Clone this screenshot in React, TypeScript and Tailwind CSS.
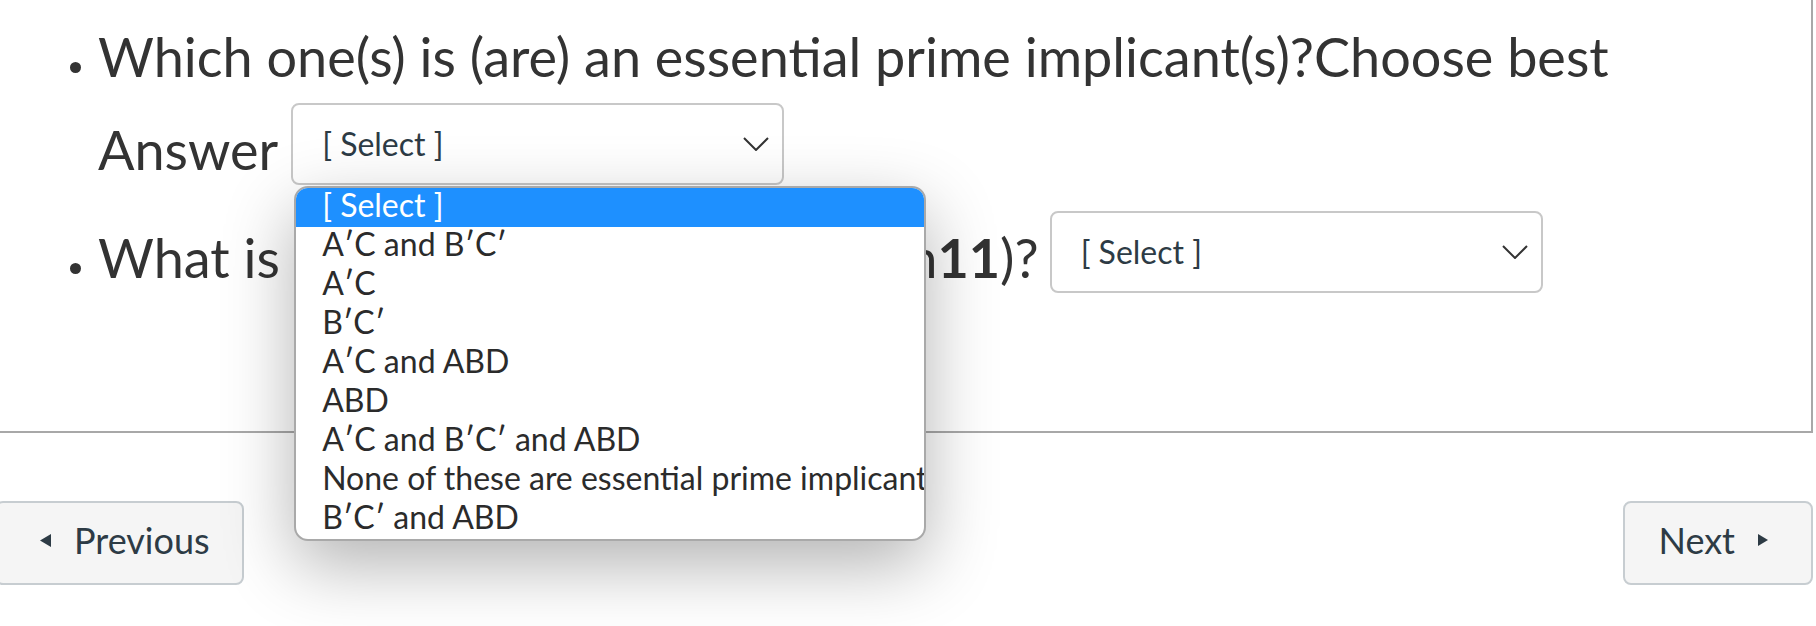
import React from "react";

const options = [
	"[ Select ]",
	"A′C and B′C′",
	"A′C",
	"B′C′",
	"A′C and ABD",
	"ABD",
	"A′C and B′C′ and ABD",
	"None of these are essential prime implicants",
	"B′C′ and ABD"
];

function Chevron() {
	return (
		<svg width="26" height="14" viewBox="0 0 26 14" fill="none">
			<polyline points="1,1 13,13 25,1" stroke="#333" strokeWidth="2" />
		</svg>
	);
}

function SelectBox() {
	return (
		<div className="flex h-[82px] w-[493px] items-center justify-between rounded-[8px] border-2 border-[#c8c8c8] bg-white pl-[29px] pr-[13px]">
			<span className="text-[32px] leading-[38px] text-[#2d3b45]">[ Select ]</span>
			<Chevron />
		</div>
	);
}

function Bullet({ top }: { top: string }) {
	return <span className={`ml-[70px] size-[11px] shrink-0 rounded-full bg-[#333] ${top}`} />;
}

export default function App() {
	return (
		<div className="relative h-[626px] w-[1816px] overflow-hidden bg-white font-[Lato,sans-serif] text-[#333]">
			<div className="h-[433px] w-[1813px] border-r-2 border-b-2 border-[#a8a8a8]">
				<ul className="pt-[16px]">
					<li className="flex">
						<Bullet top="mt-[46px]" />
						<div className="ml-[17px]">
							<p className="text-[54px] leading-[81px]">
								Which one(s) is (are) an essential prime implicant(s)?Choose best
							</p>
							<div className="flex items-start">
								<span className="mt-[12px] text-[54px] leading-[81px]">Answer</span>
								<div className="relative ml-[13px] mt-[6px]">
									<SelectBox />
									<div className="absolute left-[3px] top-[83px] z-10 w-[632px] overflow-hidden rounded-[14px] border-2 border-[#a9a9a9] bg-white shadow-[0_24px_70px_rgba(0,0,0,0.3)]">
										{options.map((o, i) => (
											<div
												key={o}
												className={`h-[39px] whitespace-nowrap pl-[26px] text-[32px] leading-[33px] ${
													i === 0 ? "bg-[#1e90ff] text-white" : "text-[#2b2b2b]"
												}`}
											>
												{o}
											</div>
										))}
									</div>
								</div>
							</div>
						</div>
					</li>
					<li className="flex">
						<Bullet top="mt-[73px]" />
						<div className="ml-[17px] flex items-start">
							<span className="mt-[27px] text-[54px] leading-[81px]">
								What is the value of function for (m<b className="font-bold">11</b>)?
							</span>
							<div className="ml-[11px] mt-[21px]">
								<SelectBox />
							</div>
						</div>
					</li>
				</ul>
			</div>

			<div className="mt-[68px] flex items-start justify-between pr-[3px]">
				<button className="-ml-[5px] flex h-[84px] items-center gap-[23px] rounded-[8px] border-2 border-[#c7cdd1] bg-[#f5f5f5] pb-[6px] pl-[43px] pr-[32px] text-[36px] text-[#2d3b45]">
					<svg width="11" height="13" viewBox="0 0 11 13">
						<polygon points="11,0 0,6.5 11,13" fill="#2d3b45" />
					</svg>
					<span className="leading-[43px]">Previous</span>
				</button>
				<button className="flex h-[84px] items-center gap-[23px] rounded-[8px] border-2 border-[#c7cdd1] bg-[#f5f5f5] pb-[6px] pl-[33px] pr-[43px] text-[36px] text-[#2d3b45]">
					<span className="leading-[43px]">Next</span>
					<svg width="10" height="12" viewBox="0 0 10 12">
						<polygon points="0,0 10,6 0,12" fill="#2d3b45" />
					</svg>
				</button>
			</div>
		</div>
	);
}
